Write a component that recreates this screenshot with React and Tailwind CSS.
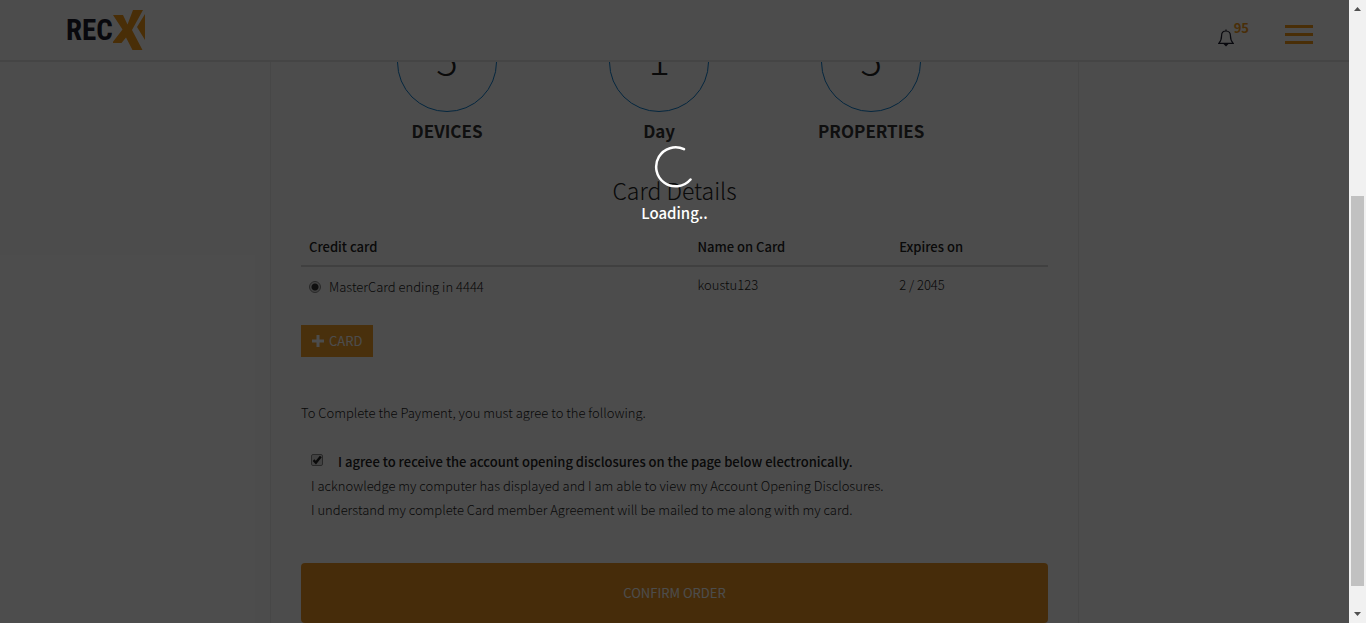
import React from "react";

const stats = [
  { value: "5", label: "DEVICES" },
  { value: "1", label: "Day" },
  { value: "5", label: "PROPERTIES" },
];

function Logo() {
  return (
    <a href="#home" aria-label="RECX" className="flex h-[42px] items-center">
      <span className="font-['Roboto_Condensed','Liberation_Sans_Narrow',sans-serif] text-[29px] leading-none font-bold text-[#1b1b2c]">
        REC
      </span>
      <svg width="33" height="42" viewBox="0 0 33 42" aria-hidden="true">
        <path
          fill="#f59a1a"
          d="M0 6H10L14.500 15.500L20 1H30L19 21L29.500 41H19.500L13 28.500L8.500 34H-1L9.500 20.500Z M32 5V31L24 18Z"
        />
      </svg>
    </a>
  );
}

function Header() {
  return (
    <header className="flex h-[62px] shrink-0 items-start justify-between border-b-2 border-[#e6e6e6] bg-white pt-[9px] pr-9 pl-[66px]">
      <Logo />
      <div className="flex items-start">
        <a href="#notifications" aria-label="Notifications, 95" className="flex pt-3">
          <svg
            width="16"
            height="18"
            viewBox="0 0 16 18"
            fill="none"
            stroke="#1b1b2c"
            strokeWidth="1.2"
            className="mt-2"
            aria-hidden="true"
          >
            <path d="M8 .5V2M8 2C5 2 3.600 4 3.600 6.500C3.600 10.500 3 12 .8 14.400H15.200C13 12 12.400 10.500 12.400 6.500C12.400 4 11 2 8 2Z" />
            <path d="M5.500 15H10.500L8 17.500Z" fill="#1b1b2c" stroke="none" />
          </svg>
          <span className="text-[13px] leading-[14px] font-bold text-[#f59a1a]">95</span>
        </a>
        <button type="button" aria-label="Menu" className="mt-4 ml-9 flex w-7 flex-col gap-[5px]">
          <span className="h-[3px] w-full bg-[#f59a1a]" />
          <span className="h-[3px] w-full bg-[#f59a1a]" />
          <span className="h-[3px] w-full bg-[#f59a1a]" />
        </button>
      </div>
    </header>
  );
}

function Stats() {
  return (
    <ul className="-mt-[50px] flex pl-10">
      {stats.map((s, i) => (
        <li key={i} className="flex w-[30%] flex-col items-center">
          <div className="flex h-[100px] w-[100px] items-center justify-center rounded-full border border-[#0f7fd0] pb-2 text-[40px] leading-none text-[#222]">
            {s.value}
          </div>
          <h3 className="mt-[7px] text-[17px] leading-6 font-bold text-[#333]">{s.label}</h3>
        </li>
      ))}
    </ul>
  );
}

function Cards() {
  return (
    <table className="mt-[31px] w-full table-fixed text-left text-[#222]">
      <thead>
        <tr className="border-b-2 border-[#d8d8d8] leading-5">
          <th className="w-[52%] px-2 pb-2 font-medium">Credit card</th>
          <th className="w-[27%] px-2 pb-2 font-medium">Name on Card</th>
          <th className="px-2 pb-2 font-medium">Expires on</th>
        </tr>
      </thead>
      <tbody>
        <tr className="align-top leading-5">
          <td className="px-2 pt-[10px]">
            <label className="flex items-center gap-2">
              <input
                type="radio"
                name="card"
                defaultChecked
                className="m-0 h-3 w-3 appearance-none rounded-full border border-[#888] bg-[radial-gradient(circle,#333_0_3px,#ddd_4px)]"
              />
              MasterCard ending in 4444
            </label>
          </td>
          <td className="px-2 pt-2">koustu123</td>
          <td className="px-2 pt-2">2 / 2045</td>
        </tr>
      </tbody>
    </table>
  );
}

function Agreement() {
  return (
    <section className="mt-[46px] text-[#222]">
      <p className="leading-5">To Complete the Payment, you must agree to the following.</p>
      <div className="mt-[27px] pl-[10px] leading-6">
        <div className="flex items-start">
          <span className="relative mt-1 mr-[15px] flex h-3 w-3">
            <input
              id="agree"
              type="checkbox"
              defaultChecked
              className="peer h-3 w-3 appearance-none rounded-xs border border-[#888] bg-[#ddd]"
            />
            <svg
              viewBox="0 0 12 12"
              className="pointer-events-none absolute inset-0 hidden peer-checked:block"
              fill="none"
              stroke="#222"
              strokeWidth="2.4"
              aria-hidden="true"
            >
              <path d="M2.500 6.200L4.900 8.600L9.800 2.600" />
            </svg>
          </span>
          <label htmlFor="agree" className="font-medium">
            I agree to receive the account opening disclosures on the page below electronically.
          </label>
        </div>
        <p>I acknowledge my computer has displayed and I am able to view my Account Opening Disclosures.</p>
        <p>I understand my complete Card member Agreement will be mailed to me along with my card.</p>
      </div>
    </section>
  );
}

function ScrollBar() {
  return (
    <div aria-hidden="true" className="flex w-[17px] shrink-0 flex-col items-center bg-[#f1f1f1]">
      <svg width="7" height="4" viewBox="0 0 7 4" className="mt-[7px]" fill="#505050">
        <path d="M0 4L3.500 0L7 4Z" />
      </svg>
      <div className="grow-[185]" />
      <div className="w-[13px] grow-[390] bg-[#c1c1c1]" />
      <div className="grow-[26]" />
      <svg width="7" height="4" viewBox="0 0 7 4" className="mb-[7px]" fill="#505050">
        <path d="M0 0L3.500 4L7 0Z" />
      </svg>
    </div>
  );
}

function LoadingOverlay() {
  return (
    <div role="status" className="absolute inset-0 flex flex-col items-center bg-black/70 pt-[145px] text-white">
      <svg width="44" height="44" viewBox="0 0 44 44" fill="none" stroke="#fff" strokeWidth="2.500" strokeLinecap="round" aria-hidden="true">
        <path d="M31 4.200A19.500 19.500 0 1 0 37.500 34.500" />
      </svg>
      <p className="mt-3 text-[15px] leading-6 font-medium">Loading..</p>
    </div>
  );
}

export default function App() {
  return (
    <div className="flex h-screen overflow-hidden bg-white font-['Noto_Sans_CJK_JP','Noto_Sans',sans-serif] text-[13px]">
      <div className="relative flex min-w-0 grow flex-col">
        <Header />
        <main className="min-h-0 grow overflow-hidden">
          <div className="mx-auto w-full max-w-[809px] border-x border-[#eee] px-[30px] font-light">
            <Stats />
            <h2 className="mt-[31px] text-center text-[23px] leading-8 text-[#222]">Card Details</h2>
            <Cards />
            <button type="button" className="mt-7 flex h-8 items-center gap-[5px] bg-[#f5a02a] px-[11px] text-[13px] font-normal text-white">
              <svg width="12" height="12" viewBox="0 0 12 12" fill="currentColor" aria-hidden="true">
                <path d="M4.500 0H7.500V4.500H12V7.500H7.500V12H4.500V7.500H0V4.500H4.500Z" />
              </svg>
              CARD
            </button>
            <Agreement />
            <button type="button" className="mt-[41px] mb-10 h-[60px] w-full rounded bg-[#ec9522] text-[13px] font-normal text-white">
              CONFIRM ORDER
            </button>
          </div>
        </main>
        <LoadingOverlay />
      </div>
      <ScrollBar />
    </div>
  );
}
